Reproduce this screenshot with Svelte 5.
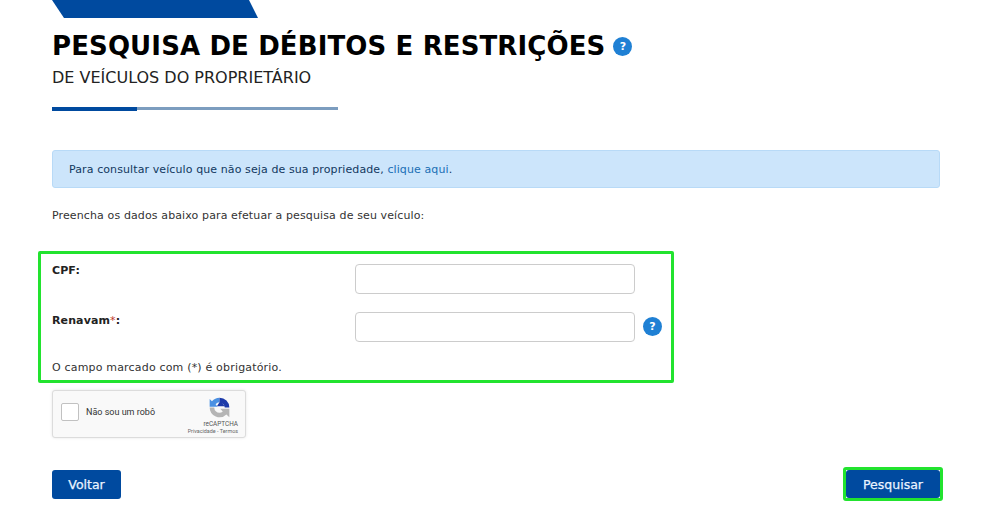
<script>
  // blue help badge, used next to the title and the Renavam field
  const alertText = 'Para consultar veículo que não seja de sua propriedade, ';
</script>

{#snippet help()}
  <span class="help">?</span>
{/snippet}

<div class="page">
  <div class="tab"></div>

  <header class="head">
    <h1><span class="title">PESQUISA DE DÉBITOS E RESTRIÇÕES</span>{@render help()}</h1>
    <h2>DE VEÍCULOS DO PROPRIETÁRIO</h2>
    <div class="rule"><span></span><i></i></div>
  </header>

  <div class="alert">{alertText}<a href="#top">clique aqui</a>.</div>

  <p class="intro">Preencha os dados abaixo para efetuar a pesquisa de seu veículo:</p>

  <div class="highlight">
    <div class="row">
      <label for="cpf">CPF:</label>
      <input id="cpf" type="text" />
    </div>
    <div class="row">
      <label for="renavam">Renavam<em>*</em>:</label>
      <input id="renavam" type="text" />
      {@render help()}
    </div>
    <p class="note">O campo marcado com (*) é obrigatório.</p>
  </div>

  <div class="captcha">
    <span class="check"></span>
    <span class="robot">Não sou um robô</span>
    <div class="brand">
      <svg width="21" height="21" viewBox="0 0 32 32">
        <path d="M16 1 A15 15 0 0 0 4.5 6.5 L1 3 V15 H13 L10 11 A8 8 0 0 1 16 8 Z" fill="#4a90e2" />
        <path d="M16 1 A15 15 0 0 1 31 16 H24 A8 8 0 0 0 20 9 L24 14 H12 L16 8 Z" fill="#1c3aa9" />
        <path d="M1 16 H8 A8 8 0 0 0 16 24 A8 8 0 0 0 21 22 L17 18 H31 V31 L26.5 26.5 A15 15 0 0 1 1 16 Z" fill="#b5b5b5" />
      </svg>
      <span class="re">reCAPTCHA</span>
      <span class="terms">Privacidade - Termos</span>
    </div>
  </div>

  <div class="actions">
    <button class="btn" type="button">Voltar</button>
    <span class="btn-ring"><button class="btn" type="button">Pesquisar</button></span>
  </div>
</div>

<style>
  :global(body) {
    margin: 0;
    background: #fff;
  }
  .page {
    width: 888px;
    margin-left: 52px;
    font-family: "DejaVu Sans", Verdana, sans-serif;
    font-size: 11px;
    letter-spacing: 0.12px;
    color: #333;
  }
  .tab {
    width: 206px;
    height: 18px;
    background: #004a9f;
    clip-path: polygon(0 0, 197px 0, 206px 100%, 12px 100%);
  }
  .head {
    padding-top: 12px;
  }
  h1 {
    margin: 0;
    display: flex;
    align-items: center;
    gap: 8px;
    font-size: 26px;
    line-height: 32px;
    font-weight: 700;
    letter-spacing: 0.12px;
    color: #000;
    white-space: nowrap;
  }
  h2 {
    margin: 7px 0 0;
    font-size: 16px;
    line-height: 18px;
    font-weight: 400;
    letter-spacing: 0;
    color: #222;
  }
  .rule {
    display: flex;
    align-items: flex-start;
    width: 286px;
    margin-top: 20px;
  }
  .rule span {
    width: 85px;
    height: 4px;
    background: #004a9f;
  }
  .rule i {
    flex: 1;
    height: 3px;
    background: #7c9dbf;
  }
  .help {
    display: inline-flex;
    align-items: center;
    justify-content: center;
    width: 19px;
    height: 19px;
    flex: none;
    border-radius: 50%;
    background: #1f80d4;
    color: #fff;
    font-size: 11px;
    font-weight: 700;
    line-height: 1;
    letter-spacing: 0;
  }
  .alert {
    box-sizing: border-box;
    height: 38px;
    margin-top: 39px;
    padding: 0 16px;
    display: flex;
    align-items: center;
    white-space: pre;
    letter-spacing: 0.1px;
    background: #cce5fb;
    border: 1px solid #b8daf7;
    border-radius: 3px;
    color: #12395f;
  }
  .alert a {
    color: #1a6fb5;
    text-decoration: none;
  }
  .intro {
    margin: 21px 0 0;
    line-height: 14px;
  }
  .highlight {
    box-sizing: border-box;
    width: 636px;
    height: 132px;
    margin: 28px 0 0 -14px;
    padding: 10px 11px 0;
    border: 3px solid #22e32f;
    border-radius: 2px;
  }
  .row {
    display: flex;
    align-items: flex-start;
    height: 48px;
  }
  .row label {
    width: 303px;
    flex: none;
    font-weight: 700;
    line-height: 14px;
    color: #222;
  }
  .row + .row label {
    padding-top: 2px;
  }
  .row label em {
    font-style: normal;
    font-weight: 400;
    color: #c0392b;
  }
  .row input {
    box-sizing: border-box;
    width: 280px;
    height: 30px;
    flex: none;
    margin: 0;
    border: 1px solid #ccc;
    border-radius: 4px;
    background: #fff;
  }
  .row .help {
    margin: 5px 0 0 8px;
  }
  .note {
    margin: 0;
    padding-top: 1px;
    line-height: 14px;
    letter-spacing: 0.18px;
  }
  .captcha {
    box-sizing: border-box;
    width: 194px;
    height: 48px;
    margin-top: 7px;
    padding-bottom: 5px;
    display: flex;
    align-items: center;
    background: #f9f9f9;
    border: 1px solid #dcdcdc;
    border-radius: 3px;
    box-shadow: 0 0 3px rgba(0, 0, 0, 0.1);
    font-family: Roboto, "Liberation Sans", sans-serif;
    letter-spacing: 0;
  }
  .check {
    box-sizing: border-box;
    width: 18px;
    height: 18px;
    margin-left: 8px;
    background: #fff;
    border: 1px solid #c1c1c1;
    border-radius: 2px;
    flex: none;
  }
  .robot {
    margin-left: 7px;
    font-size: 9px;
    color: #333;
    white-space: nowrap;
  }
  .brand {
    align-self: flex-start;
    margin-left: auto;
    padding: 6px 7px 0 0;
    display: flex;
    flex-direction: column;
    align-items: flex-end;
    color: #666;
    white-space: nowrap;
  }
  .brand svg {
    margin: 0 8px 3px 0;
  }
  .re {
    font-size: 6.4px;
    line-height: 7px;
    color: #555;
  }
  .terms {
    font-size: 5.4px;
    line-height: 7px;
  }
  .actions {
    display: flex;
    justify-content: space-between;
    align-items: center;
    margin-top: 29px;
  }
  .btn {
    width: 69px;
    height: 29px;
    padding: 0;
    border: 0;
    border-radius: 3px;
    background: #004a9f;
    color: #eaf3ff;
    font: 400 12.5px "DejaVu Sans", Verdana, sans-serif;
    -webkit-text-stroke: 0.25px #eaf3ff;
  }
  .btn-ring {
    display: inline-flex;
    margin-right: -3px;
    border: 3px solid #22e32f;
    border-radius: 3px;
  }
  .btn-ring .btn {
    width: 94px;
    height: 28px;
  }
</style>
